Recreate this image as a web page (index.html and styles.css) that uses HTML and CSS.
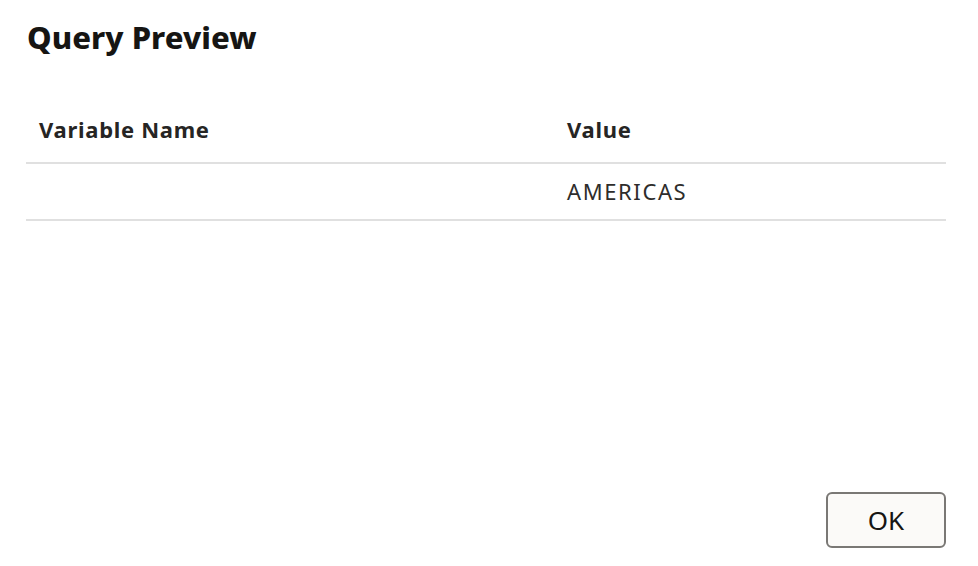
FILE: index.html
```html
<!DOCTYPE html>
<html>
<head>
<meta charset="utf-8">
<link rel="stylesheet" href="styles.css">
</head>
<body>
<div class="dialog">
  <h1 class="title">Query Preview</h1>
  <div class="content">
    <table class="grid">
      <thead>
        <tr><th class="c1">Variable Name</th><th class="c2">Value</th></tr>
      </thead>
      <tbody>
        <tr><td class="c1"></td><td class="c2">AMERICAS</td></tr>
      </tbody>
    </table>
  </div>
  <div class="footer">
    <button class="btn">OK</button>
  </div>
</div>
</body>
</html>
```

FILE: styles.css
```css
html, body {
  margin: 0;
  padding: 0;
  background: #ffffff;
}
body {
  font-family: "Noto Sans", "Open Sans", sans-serif;
  color: #161513;
}
.dialog {
  width: 978px;
  height: 566px;
  box-sizing: border-box;
  padding: 17px 32px 18px 26px;
  display: flex;
  flex-direction: column;
}
.title {
  margin: 0 0 0 1px;
  font-size: 31px;
  font-weight: 800;
  line-height: 40px;
  letter-spacing: 0.05px;
  color: #161513;
}
.content {
  flex: 1;
  padding-top: 47px;
}
.grid {
  width: 920px;
  border-collapse: collapse;
  table-layout: fixed;
}
.grid th, .grid td {
  text-align: left;
  padding-left: 13px;
  padding-right: 0;
}
.grid .c1 { width: 515px; }
.grid th {
  padding-top: 10px;
  padding-bottom: 18px;
  line-height: 30px;
  font-size: 22px;
  font-weight: 700;
  letter-spacing: 0.7px;
  color: #262524;
  border-bottom: 2px solid #e0e0e0;
  vertical-align: middle;
}
.grid td {
  padding-top: 12px;
  padding-bottom: 13px;
  line-height: 30px;
  height: 30px;
  font-size: 22px;
  font-weight: 400;
  letter-spacing: 1.6px;
  color: #2e2d2b;
  border-bottom: 2px solid #e0e0e0;
}
.footer {
  display: flex;
  justify-content: flex-end;
}
.btn {
  width: 120px;
  height: 56px;
  border: 2px solid #7a7875;
  border-radius: 6px;
  background: #fbfaf8;
  font-family: "Noto Sans", "Open Sans", sans-serif;
  font-size: 26px;
  color: #161513;
  padding: 0;
}
```
